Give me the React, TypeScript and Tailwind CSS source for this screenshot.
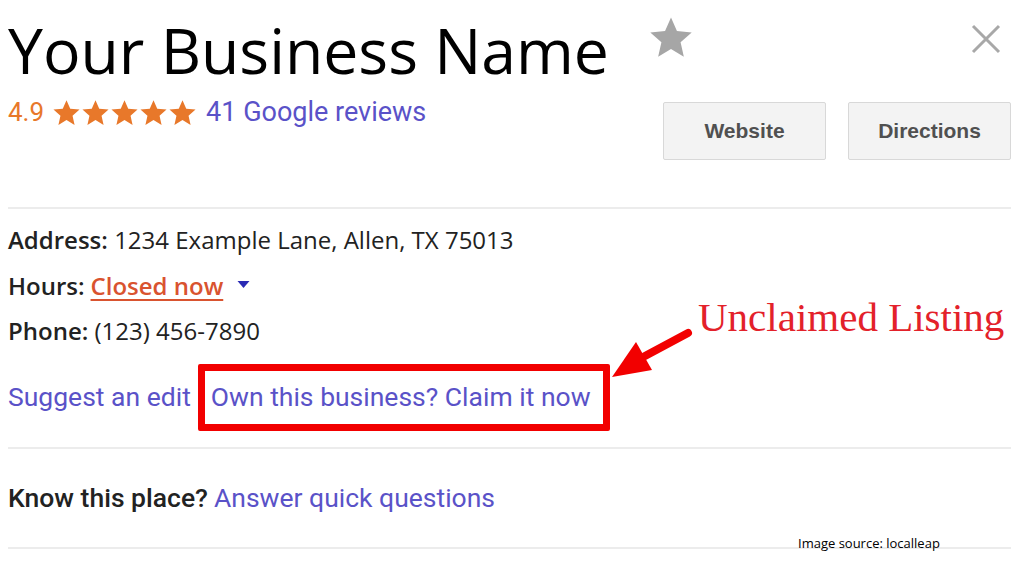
import React from "react";

const Star = ({ className }: { className?: string }) => (
  <svg viewBox="0 0 24 24" className={className} fill="currentColor">
    <path d="M12 1.8l3.1 7.1 7.7.7-5.8 5.1 1.7 7.6L12 18.3l-6.7 4 1.7-7.6-5.8-5.1 7.7-.7z" />
  </svg>
);

export default function App() {
  const link = "text-[#5a52c8]";
  return (
    <div className="relative w-[1024px] h-[576px] overflow-hidden bg-white pl-[8px] pr-[13px]" style={{ fontFamily: "Roboto, 'Liberation Sans', sans-serif" }}>
      {/* Header */}
      <div className="flex h-[207px]">
        <div className="flex-1 pt-[10px]">
          <div className="text-[62.5px] leading-[80px] text-black" style={{ fontFamily: "'Open Sans', sans-serif" }}>
            Your Business Name
          </div>
          <div className="mt-[6px] flex items-center text-[26px] leading-[32px]">
            <span className="text-[#e8782a]">4.9</span>
            <span className="ml-[8px] flex text-[#e8782a]">
              {[0, 1, 2, 3, 4].map((i) => (
                <Star key={i} className="w-[29px] h-[29px]" />
              ))}
            </span>
            <span className={`ml-[9px] text-[27px] ${link}`}>41 Google reviews</span>
          </div>
        </div>
        <div className="w-[348px] flex flex-col">
          <div className="flex justify-between items-start pt-[14px]">
            <Star className="w-[46px] h-[46px] text-[#a6a6a6] -ml-[15px]" />
            <svg viewBox="0 0 30 30" className="w-[30px] h-[30px] mt-[10px] mr-[10px]" stroke="#a8a8a8" strokeWidth="3">
              <path d="M2 2L28 28M28 2L2 28" />
            </svg>
          </div>
          <div className="mt-[42px] flex gap-[22px]">
            {["Website", "Directions"].map((t) => (
              <div
                key={t}
                className="w-[163px] h-[58px] flex items-center justify-center bg-[#f3f3f3] border border-[#d8d8d8] rounded-[2px] text-[21px] font-bold text-[#505050]"
                style={{ fontFamily: "'Liberation Sans', Arial, sans-serif" }}
              >
                {t}
              </div>
            ))}
          </div>
        </div>
      </div>

      <div className="h-[2px] bg-[#ececec]" />

      {/* Details */}
      <div className="pt-[8px] text-[24px] leading-[45.5px] text-[#222]" style={{ fontFamily: "'Open Sans', sans-serif" }}>
        <div>
          <span className="font-semibold">Address:</span> 1234 Example Lane, Allen, TX 75013
        </div>
        <div className="flex items-center">
          <span className="font-semibold">Hours:</span>
          <span className="ml-[6px] text-[#d9532f] font-semibold underline underline-offset-[4px] decoration-[2px]">Closed now</span>
          <svg viewBox="0 0 12 8" className="ml-[14px] w-[13px] h-[8px]">
            <path d="M0 0H12L6 7z" fill="#2b2bb5" />
          </svg>
        </div>
        <div>
          <span className="font-semibold">Phone:</span> (123) 456-7890
        </div>
      </div>

      <div className="mt-[10px] flex items-center text-[26.5px]">
        <span className={link}>Suggest an edit</span>
        <span className={`ml-[7px] h-[67px] inline-flex items-center border-[7px] border-[#f20000] rounded-[2px] pl-[6px] pr-[12px] ${link}`}>
          Own this business? Claim it now
        </span>
      </div>

      <div className="mt-[16px] h-[2px] bg-[#ececec]" />

      <div className="h-[98px] flex items-center text-[26.5px]">
        <span className="text-[#222] font-medium">Know this place?</span>
        <span className={`ml-[6px] ${link}`}>Answer quick questions</span>
      </div>

      <div className="h-[2px] bg-[#ececec]" />

      {/* Annotations */}
      <div className="absolute left-[698px] top-[290px] text-[41px] leading-[54px] text-[#e3212a]" style={{ fontFamily: "'Liberation Serif', serif" }}>
        Unclaimed Listing
      </div>
      <svg className="absolute left-[600px] top-[320px] w-[100px] h-[70px]" viewBox="0 0 100 70">
        <path d="M88 13L45 36" stroke="#f20000" strokeWidth="8" strokeLinecap="round" />
        <path d="M12 57L36 22L52 50z" fill="#f20000" />
      </svg>
      <div className="absolute left-[798px] top-[534px] text-[13px] text-black" style={{ fontFamily: "'Open Sans', sans-serif" }}>
        Image source: localleap
      </div>
    </div>
  );
}
